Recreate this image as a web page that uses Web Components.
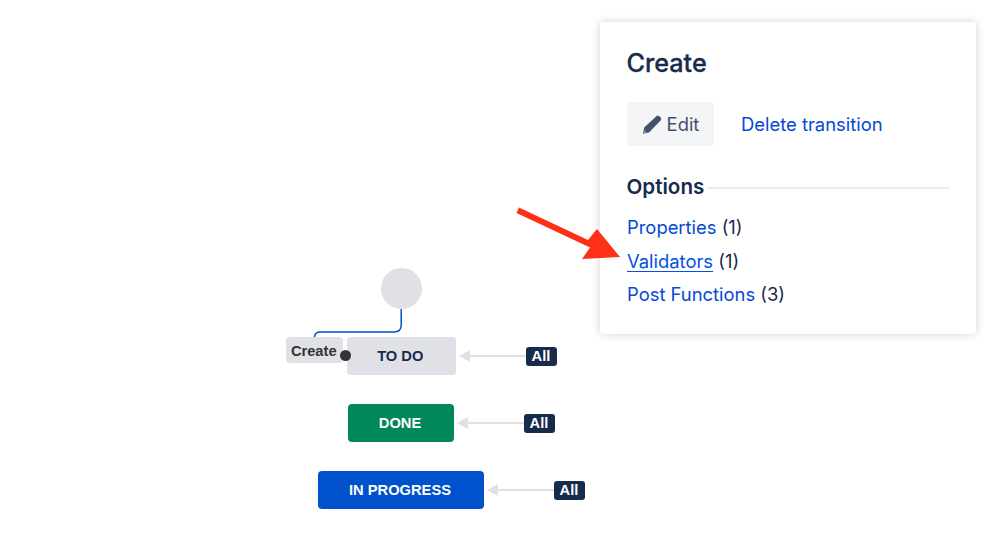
<!DOCTYPE html>
<html>
<head>
<meta charset="utf-8">
<title>Workflow</title>
<style>
    html, body { margin: 0; height: 100%; background: #fff; overflow: hidden; }
    body { position: relative; width: 999px; height: 541px; }
</style>
</head>
<body>
<workflow-diagram></workflow-diagram>
<transition-panel title-text="Create">
    <option-link count="1">Properties</option-link>
    <option-link count="1" active>Validators</option-link>
    <option-link count="3">Post Functions</option-link>
</transition-panel>
<red-arrow></red-arrow>

<script>
// Status box with the global "All" transition pointing at it
class WorkflowStatus extends HTMLElement {
    constructor() {
        super();
        this.attachShadow({ mode: 'open' });
    }

    connectedCallback() {
        const bg = this.getAttribute('bg') || '#dfe1e6';
        const fg = this.getAttribute('fg') || '#172b4d';
        const width = this.getAttribute('box-width') || 100;
        this.shadowRoot.innerHTML = `
            <style>
                :host {
                    display: flex;
                    align-items: center;
                    font: bold 14.7px "Liberation Sans", Arial, sans-serif;
                }
                .box {
                    box-sizing: border-box;
                    width: ${width}px;
                    height: 38px;
                    padding-right: 2px;
                    display: flex;
                    align-items: center;
                    justify-content: center;
                    background: ${bg};
                    color: ${fg};
                    border-radius: 4px;
                }
                .arrow {
                    display: flex;
                    align-items: center;
                    margin-left: 3px;
                }
                .head {
                    width: 0;
                    height: 0;
                    border-top: 6px solid transparent;
                    border-bottom: 6px solid transparent;
                    border-right: 11px solid #dfe1e6;
                }
                .line {
                    width: 56px;
                    height: 2px;
                    background: #dfe1e6;
                }
                .all {
                    box-sizing: border-box;
                    width: 31px;
                    height: 19px;
                    padding-right: 1px;
                    display: flex;
                    align-items: center;
                    justify-content: center;
                    background: #172b4d;
                    color: #fff;
                    border-radius: 3px;
                }
            </style>
            <div class="box"><slot></slot></div>
            <div class="arrow"><div class="head"></div><div class="line"></div></div>
            <div class="all">All</div>
        `;
    }
}

class WorkflowDiagram extends HTMLElement {
    constructor() {
        super();
        this.attachShadow({ mode: 'open' });
    }

    connectedCallback() {
        this.shadowRoot.innerHTML = `
            <style>
                :host {
                    display: block;
                    position: absolute;
                    left: 0;
                    top: 0;
                    width: 600px;
                    height: 541px;
                }
                .initial {
                    position: absolute;
                    left: 381px;
                    top: 268px;
                    width: 40.5px;
                    height: 40.5px;
                    border-radius: 50%;
                    background: #dfe1e6;
                }
                svg {
                    position: absolute;
                    left: 0;
                    top: 0;
                }
                .label {
                    box-sizing: border-box;
                    position: absolute;
                    left: 286px;
                    top: 337px;
                    width: 56.5px;
                    height: 26px;
                    padding: 2px 1px 0 0;
                    display: flex;
                    align-items: center;
                    justify-content: center;
                    background: #dfe1e6;
                    border-radius: 4px;
                    color: #333;
                    font: bold 14.7px "Liberation Sans", Arial, sans-serif;
                }
                .dot {
                    position: absolute;
                    left: 339.5px;
                    top: 350px;
                    width: 11px;
                    height: 11px;
                    border-radius: 50%;
                    background: #333;
                    z-index: 1;
                }
                workflow-status { position: absolute; }
                .todo { left: 346.5px; top: 337px; }
                .done { left: 348px; top: 404px; }
                .progress { left: 318px; top: 471px; }
            </style>
            <div class="initial"></div>
            <svg width="600" height="541" fill="none">
                <path d="M401.2 309V325Q401.2 332 394 332H321Q314.5 332 314.5 337" stroke="#0052cc" stroke-width="1.5"/>
            </svg>
            <workflow-status class="todo" box-width="109.5">TO DO</workflow-status>
            <workflow-status class="done" box-width="106" bg="#00875a" fg="#fff">DONE</workflow-status>
            <workflow-status class="progress" box-width="166" bg="#0052cc" fg="#fff">IN PROGRESS</workflow-status>
            <div class="label">Create</div>
            <div class="dot"></div>
        `;
    }
}

class OptionLink extends HTMLElement {
    constructor() {
        super();
        this.attachShadow({ mode: 'open' });
    }

    connectedCallback() {
        const active = this.hasAttribute('active');
        this.shadowRoot.innerHTML = `
            <style>
                :host {
                    display: block;
                    height: 33.5px;
                    line-height: 33.5px;
                    color: #172b4d;
                    white-space: nowrap;
                }
                a {
                    color: ${active ? '#0052e6' : '#0549d4'};
                    text-decoration: ${active ? 'underline' : 'none'};
                    text-underline-offset: 3px;
                }
            </style>
            <a href="#"><slot></slot></a> (${this.getAttribute('count')})
        `;
    }
}

// Details panel for the selected transition
class TransitionPanel extends HTMLElement {
    constructor() {
        super();
        this.attachShadow({ mode: 'open' });
    }

    connectedCallback() {
        this.shadowRoot.innerHTML = `
            <style>
                :host {
                    display: flex;
                    flex-direction: column;
                    box-sizing: border-box;
                    position: absolute;
                    left: 600px;
                    top: 22px;
                    width: 376px;
                    height: 312px;
                    padding: 24px 27px 0;
                    background: #fff;
                    border-radius: 3px;
                    box-shadow: 0 0 8px rgba(9, 30, 66, 0.2);
                    font: 18.4px Inter, "Noto Sans", sans-serif;
                    color: #172b4d;
                }
                h1 {
                    margin: 0 0 0 -0.5px;
                    font-size: 25.2px;
                    line-height: 34px;
                    font-weight: 500;
                    -webkit-text-stroke: 0.3px #172b4d;
                }
                .actions {
                    display: flex;
                    align-items: center;
                    gap: 27px;
                    margin-top: 22px;
                }
                .edit {
                    width: 87px;
                    height: 44px;
                    display: flex;
                    align-items: center;
                    justify-content: center;
                    gap: 5px;
                    background: #f4f5f7;
                    border-radius: 3px;
                    color: #42526e;
                }
                .actions a {
                    color: #0549d4;
                    text-decoration: none;
                }
                .heading {
                    display: flex;
                    align-items: center;
                    gap: 4px;
                    margin-top: 26px;
                    margin-bottom: 9px;
                }
                h2 {
                    margin: 0 0 0 -0.5px;
                    font-size: 20.6px;
                    line-height: 30px;
                    font-weight: 600;
                }
                .rule {
                    flex: 1;
                    height: 2px;
                    margin-top: 2px;
                    background: #ebecf0;
                }
            </style>
            <h1>${this.getAttribute('title-text')}</h1>
            <div class="actions">
                <div class="edit">
                    <svg width="20" height="19" viewBox="0 0 20 19">
                        <path d="M14.4 1.2Q15.6 0 17 1L18.6 2.4Q20 3.9 18.8 5.3L7 17.4 1 18.8 2.2 12.6Z" fill="#42526e"/>
                        <path d="M1.9 14.5 4.8 17.5 1 18.8Z" fill="#8993a4"/>
                    </svg>
                    <span>Edit</span>
                </div>
                <a href="#">Delete transition</a>
            </div>
            <div class="heading"><h2>Options</h2><div class="rule"></div></div>
            <slot></slot>
        `;
    }
}

// Red annotation arrow drawn over the screenshot
class RedArrow extends HTMLElement {
    constructor() {
        super();
        this.attachShadow({ mode: 'open' });
    }

    connectedCallback() {
        this.shadowRoot.innerHTML = `
            <style>
                :host {
                    display: block;
                    position: absolute;
                    left: 510px;
                    top: 200px;
                    width: 115px;
                    height: 65px;
                }
            </style>
            <svg width="115" height="65" viewBox="510 200 115 65">
                <polygon points="519,207.5 588,240 597,229 620,257 582,259 590,247.5 516.5,213" fill="#ff3014"/>
            </svg>
        `;
    }
}

customElements.define('workflow-status', WorkflowStatus);
customElements.define('workflow-diagram', WorkflowDiagram);
customElements.define('option-link', OptionLink);
customElements.define('transition-panel', TransitionPanel);
customElements.define('red-arrow', RedArrow);
</script>
</body>
</html>
